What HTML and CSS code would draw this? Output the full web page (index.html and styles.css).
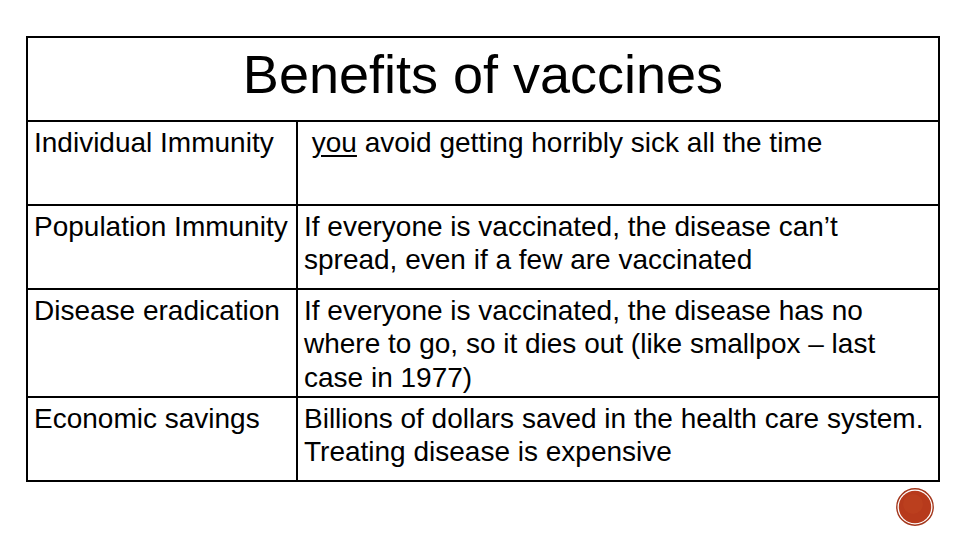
FILE: index.html
```html
<!DOCTYPE html>
<html lang="en">
<head>
<meta charset="utf-8">
<title>Benefits of vaccines</title>
<link rel="stylesheet" href="styles.css">
</head>
<body>
<div class="slide">
  <div class="grid">
    <div class="title">Benefits of vaccines</div>
    <div class="cell key">Individual Immunity</div>
    <div class="cell val">&nbsp;<u>you</u> avoid getting horribly sick all the time</div>
    <div class="cell key">Population Immunity</div>
    <div class="cell val">If everyone is vaccinated, the disease can’t<br>spread, even if a few are vaccinated</div>
    <div class="cell key">Disease eradication</div>
    <div class="cell val">If everyone is vaccinated, the disease has no<br>where to go, so it dies out (like smallpox – last<br>case in 1977)</div>
    <div class="cell key last">Economic savings</div>
    <div class="cell val last">Billions of dollars saved in the health care system.<br>Treating disease is expensive</div>
  </div>
  <div class="footer">
    <svg class="badge" width="38" height="38" viewBox="0 0 38 38" aria-hidden="true">
      <circle cx="19" cy="19" r="18.2" fill="none" stroke="#a3361b" stroke-width="1.4"/>
      <circle cx="19" cy="19" r="16.2" fill="#b73a1c"/>
      <circle cx="17" cy="16" r="10" fill="#c0441f" opacity="0.5"/>
    </svg>
  </div>
</div>
</body>
</html>
```

FILE: styles.css
```css
html, body {
  margin: 0;
  padding: 0;
  background: #ffffff;
}

.slide {
  width: 960px;
  height: 540px;
  box-sizing: border-box;
  padding: 36px 20px 0 26px;
  font-family: "Liberation Sans", Arial, sans-serif;
  color: #000000;
}

.grid {
  width: 914px;
  box-sizing: border-box;
  border: 2px solid #000000;
  display: grid;
  grid-template-columns: 270px 640px;
  grid-template-rows: 84px 84px 84px 108px 82px;
}

.title {
  grid-column: 1 / span 2;
  border-bottom: 2px solid #000000;
  text-align: center;
  font-size: 54px;
  line-height: 64px;
  padding-top: 4px;
  box-sizing: border-box;
}

.cell {
  box-sizing: border-box;
  border-bottom: 2px solid #000000;
  font-size: 28px;
  line-height: 33.6px;
  padding: 3.5px 4px 0 6px;
  white-space: nowrap;
}

.key {
  border-right: 2px solid #000000;
}

.cell.last {
  border-bottom: none;
}

.val u {
  text-decoration-thickness: 2px;
  text-underline-offset: 3px;
}

.footer {
  width: 914px;
  display: flex;
  justify-content: flex-end;
  padding-right: 6px;
  margin-top: 6px;
  box-sizing: border-box;
}

.badge {
  display: block;
}
```
